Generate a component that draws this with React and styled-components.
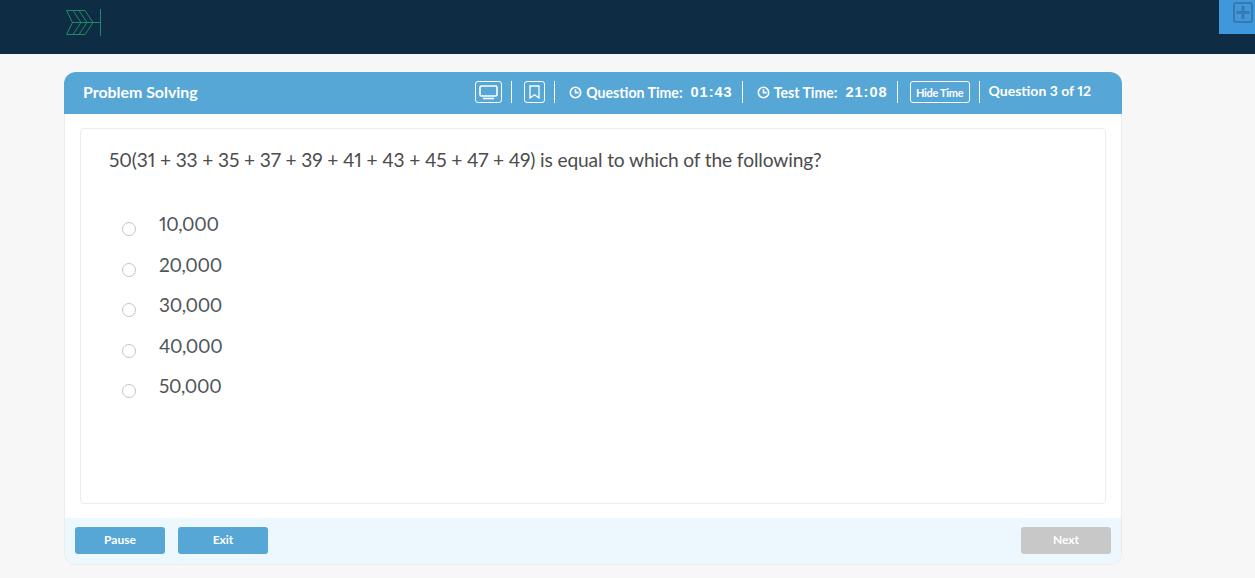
import React from 'react';
import styled, { createGlobalStyle } from 'styled-components';

const GlobalStyle = createGlobalStyle`
  html, body {
    margin: 0;
    height: 100%;
    overflow: hidden;
    background-color: #f7f7f7;
    font-family: Lato, "Open Sans", sans-serif;
    font-variant-numeric: proportional-nums;
  }
`;

const TopBar = styled.header`
  position: relative;
  height: 54px;
  background-color: #0e2d44;
  padding: 9px 0 0 65px;
  box-sizing: border-box;
`;

const Logo = styled.svg`
  display: block;
  width: 38px;
  height: 28px;
`;

const PlusTab = styled.div`
  position: absolute;
  top: 0;
  right: 0;
  width: 36px;
  height: 34px;
  box-sizing: border-box;
  display: flex;
  justify-content: flex-end;
  padding-right: 2px;
  background-color: #3f97dc;
`;

const Page = styled.main`
  padding: 18px 0 0 64px;
`;

const Card = styled.section`
  width: 1058px;
  height: 493px;
  box-sizing: border-box;
  display: flex;
  flex-direction: column;
  background-color: #fff;
  border: 1px solid #ececec;
  border-top: none;
  border-radius: 12px;
`;

const CardHeader = styled.div`
  height: 42px;
  margin: 0 -1px;
  display: flex;
  align-items: center;
  padding-left: 19px;
  background-color: #56a6d6;
  border-radius: 12px 12px 0 0;
  color: #fff;
`;

const Title = styled.h2`
  margin: -4px 0 0;
  flex: 1;
  font-size: 15.9px;
  font-weight: 700;
`;

const Tools = styled.div`
  display: flex;
  align-items: center;
  height: 100%;
  box-sizing: border-box;
  padding: 0 31px 2px 0;
`;

const IconBox = styled.div`
  height: 22px;
  display: flex;
  align-items: center;
  justify-content: center;
  box-sizing: border-box;
  border: 1px solid #fff;
  border-radius: 3px;
  width: ${props => props.$width}px;
`;

const Divider = styled.span`
  width: 1px;
  height: 22px;
  background-color: #fff;
  margin: 0 ${props => props.$right || 12}px 0 ${props => props.$left || 9}px;
`;

const Timer = styled.div`
  display: flex;
  align-items: center;
  gap: 4px;
  font-size: 14.15px;
  font-weight: 700;
  white-space: nowrap;
`;

const TimerValue = styled.b`
  margin-left: 4px;
  font-family: "Liberation Sans", Arial, sans-serif;
  font-size: 14.5px;
  font-weight: 700;
  letter-spacing: 1px;
`;

const HideButton = styled.button`
  width: 60px;
  height: 22px;
  padding: 0;
  border: 1px solid #fff;
  border-radius: 3px;
  background: transparent;
  color: #fff;
  font-family: inherit;
  font-size: 11px;
  font-weight: 700;
  letter-spacing: -0.3px;
`;

const Progress = styled.span`
  font-size: 14px;
  font-weight: 700;
  margin-top: -4px;
  white-space: nowrap;
`;

const Body = styled.div`
  flex: 1;
  min-height: 0;
  padding: 14px 15px;
`;

const QuestionBox = styled.div`
  height: 100%;
  box-sizing: border-box;
  padding: 19px 28px;
  border: 1px solid #ececec;
  border-radius: 4px;
`;

const Question = styled.p`
  margin: 0 0 39.5px;
  font-size: 19.2px;
  line-height: 24px;
  letter-spacing: -0.14px;
  color: #4c4c4c;
`;

const Choices = styled.div`
  display: flex;
  flex-direction: column;
  gap: 16.5px;
`;

const Choice = styled.label`
  display: flex;
  align-items: center;
  height: 24px;
  font-size: 19px;
  letter-spacing: -0.3px;
  color: #4f5659;
`;

const Radio = styled.span`
  width: 12px;
  height: 12px;
  margin: 11px 23px 0 13px;
  border: 1px solid #c4c4c4;
  border-radius: 50%;
  background-color: #fff;
`;

const Footer = styled.div`
  height: 46px;
  box-sizing: border-box;
  display: flex;
  align-items: flex-start;
  justify-content: space-between;
  padding: 9px 10px 0;
  background-color: #edf8fe;
  border-radius: 0 0 12px 12px;
`;

const ButtonGroup = styled.div`
  display: flex;
  gap: 13px;
`;

const ActionButton = styled.button`
  width: 90px;
  height: 27px;
  padding: 0 0 2px;
  border: none;
  border-radius: 3px;
  background-color: ${props => (props.$disabled ? '#c8c8c8' : '#56a6d6')};
  color: #fff;
  font-family: inherit;
  font-size: 12px;
  font-weight: 700;
`;

const ClockIcon = () => (
  <svg width="13" height="13" viewBox="0 0 13 13" fill="none" stroke="#fff" strokeWidth="1.6">
    <circle cx="6.5" cy="6.5" r="5.2" />
    <path d="M6.5 3.2v3.4h3.2" />
  </svg>
);

const App = () => {
  return (
    <>
      <GlobalStyle />
      <TopBar>
        <Logo viewBox="0 0 38 28" fill="none" stroke="#1f8a66" strokeWidth="1">
          <path d="M1.500 1.500H20L28 13.500 20 25.500H1.500L7.500 13.500z" />
          <path d="M8 1.500L16 13.500 8 25.500" />
          <path d="M14 1.500L22 13.500 14 25.500" />
          <path d="M7.500 13.500H35.500M35.500 0V27" />
        </Logo>
        <PlusTab>
          <svg width="20" height="24" viewBox="0 0 20 24" fill="none" stroke="#3a79ad">
            <rect x="1" y="3" width="18" height="19" rx="2" strokeWidth="2" />
            <path d="M10 6v13M3.500 12.500h13" strokeWidth="3" />
          </svg>
        </PlusTab>
      </TopBar>
      <Page>
        <Card>
          <CardHeader>
            <Title>Problem Solving</Title>
            <Tools>
              <IconBox $width={27}>
                <svg width="19" height="15" viewBox="0 0 19 15" fill="none" stroke="#fff" strokeWidth="1.600">
                  <rect x="1" y="1" width="17" height="10" rx="1.500" />
                  <path d="M4 13.500h11" />
                </svg>
              </IconBox>
              <Divider />
              <IconBox $width={21}>
                <svg width="11" height="14" viewBox="0 0 11 14" fill="none" stroke="#fff" strokeWidth="1.300">
                  <path d="M1 1h9v12L5.500 9.800 1 13z" />
                </svg>
              </IconBox>
              <Divider $right={14} />
              <Timer>
                <ClockIcon />
                Question Time:
                <TimerValue>01:43</TimerValue>
              </Timer>
              <Divider $right={14} />
              <Timer>
                <ClockIcon />
                Test Time:
                <TimerValue>21:08</TimerValue>
              </Timer>
              <Divider $right={12} />
              <HideButton>Hide Time</HideButton>
              <Divider $right={9} />
              <Progress>Question 3 of 12</Progress>
            </Tools>
          </CardHeader>
          <Body>
            <QuestionBox>
              <Question>50(31 + 33 + 35 + 37 + 39 + 41 + 43 + 45 + 47 + 49) is equal to which of the following?</Question>
              <Choices>
                {['10,000', '20,000', '30,000', '40,000', '50,000'].map(item => (
                  <Choice key={item}>
                    <Radio />
                    {item}
                  </Choice>
                ))}
              </Choices>
            </QuestionBox>
          </Body>
          <Footer>
            <ButtonGroup>
              <ActionButton>Pause</ActionButton>
              <ActionButton>Exit</ActionButton>
            </ButtonGroup>
            <ActionButton $disabled>Next</ActionButton>
          </Footer>
        </Card>
      </Page>
    </>
  );
};

export default App;
